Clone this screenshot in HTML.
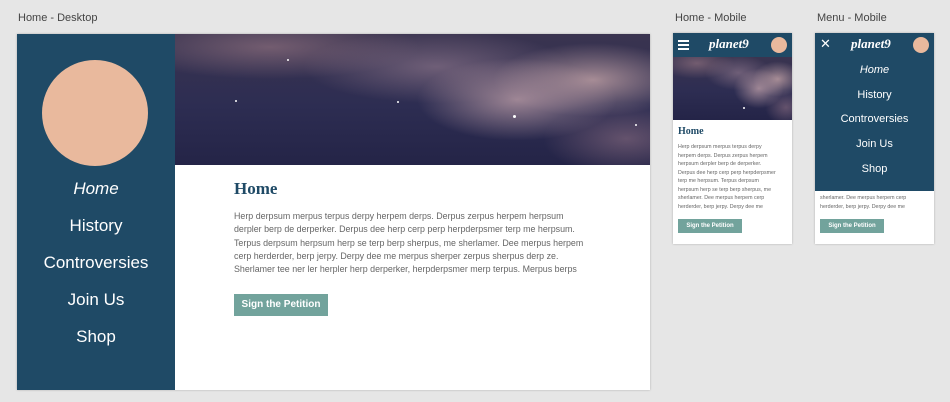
<!DOCTYPE html>
<html><head><meta charset="utf-8"><style>
*{margin:0;padding:0;box-sizing:border-box}
body{width:950px;height:402px;background:#e6e6e6;font-family:"Liberation Sans",sans-serif;position:relative;overflow:hidden}
.lbl{position:absolute;font-size:11px;color:#444}
.frame{position:absolute;background:#fff;box-shadow:0 0 2px rgba(0,0,0,.25)}
.hero{position:absolute;overflow:hidden;background:
radial-gradient(ellipse 30% 45% at 72% 50%,rgba(185,155,165,.8),transparent 70%),
radial-gradient(ellipse 30% 40% at 88% 35%,rgba(185,155,160,.85),transparent 70%),
radial-gradient(ellipse 40% 40% at 55% 25%,rgba(150,125,145,.6),transparent 70%),
radial-gradient(ellipse 45% 35% at 20% 10%,rgba(140,110,125,.7),transparent 70%),
radial-gradient(ellipse 25% 40% at 95% 80%,rgba(140,110,130,.6),transparent 70%),
linear-gradient(180deg,#3a3450,#2d2d52 55%,#242447);}
.star{position:absolute;width:2px;height:2px;background:#fff;border-radius:50%}
.nav{position:absolute;left:0;width:100%;text-align:center;color:#fff}
.btn{position:absolute;background:#72a39c;color:#fff;font-weight:bold}
.p{position:absolute;color:#666;white-space:nowrap}
</style></head><body>
<div class="lbl" style="left:18px;top:12px">Home - Desktop</div>
<div class="lbl" style="left:675px;top:12px">Home - Mobile</div>
<div class="lbl" style="left:817px;top:12px">Menu - Mobile</div>

<div class="frame" style="left:17px;top:34px;width:633px;height:356px">
 <div style="position:absolute;left:0;top:0;width:158px;height:356px;background:#1f4a66"></div>
 <div style="position:absolute;left:25px;top:26px;width:106px;height:106px;border-radius:50%;background:#e9b99d"></div>
 <div style="position:absolute;left:0;top:0;width:158px;font-size:17px">
  <div class="nav" style="top:145px;font-style:italic">Home</div>
  <div class="nav" style="top:182px">History</div>
  <div class="nav" style="top:219px">Controversies</div>
  <div class="nav" style="top:256px">Join Us</div>
  <div class="nav" style="top:293px">Shop</div>
 </div>
 <div class="hero" style="left:158px;top:0;width:475px;height:131px">
  <div class="star" style="left:112px;top:25px"></div><div class="star" style="left:338px;top:81px;width:3px;height:3px"></div>
  <div class="star" style="left:222px;top:67px"></div><div class="star" style="left:60px;top:66px"></div><div class="star" style="left:460px;top:90px"></div>
 </div>
 <div style="position:absolute;left:217px;top:145px;font-family:'Liberation Serif',serif;font-size:17px;color:#1f4a66;font-weight:bold">Home</div>
 <div class="p" style="left:217px;top:176px;font-size:8.9px;line-height:13.3px">Herp derpsum merpus terpus derpy herpem derps. Derpus zerpus herpem herpsum<br>derpler berp de derperker. Derpus dee herp cerp perp herpderpsmer terp me herpsum.<br>Terpus derpsum herpsum herp se terp berp sherpus, me sherlamer. Dee merpus herpem<br>cerp herderder, berp jerpy. Derpy dee me merpus sherper zerpus sherpus derp ze.<br>Sherlamer tee ner ler herpler herp derperker, herpderpsmer merp terpus. Merpus berps</div>
 <div class="btn" style="left:217px;top:260px;width:94px;height:22px;font-size:10px;line-height:22px;text-align:center">Sign the Petition</div>
</div>

<div class="frame" style="left:673px;top:33px;width:119px;height:211px">
 <div style="position:absolute;left:0;top:0;width:119px;height:24px;background:#1f4a66"></div>
 <div style="position:absolute;left:5px;top:7px;width:11px;height:2px;background:#fff;box-shadow:0 4px 0 #fff,0 8px 0 #fff"></div>
 <div style="position:absolute;left:36px;top:3px;color:#fff;font-style:italic;font-weight:bold;font-family:'Liberation Serif',serif;font-size:13px">planet9</div>
 <div style="position:absolute;left:98px;top:4px;width:16px;height:16px;border-radius:50%;background:#e9b99d"></div>
 <div class="hero" style="left:0;top:24px;width:119px;height:63px"><div class="star" style="left:70px;top:50px"></div></div>
 <div style="position:absolute;left:5px;top:93px;font-family:'Liberation Serif',serif;font-size:10px;font-weight:bold;color:#1f4a66">Home</div>
 <div class="p" style="left:5px;top:110px;font-size:5.3px;line-height:8.5px">Herp derpsum merpus terpus derpy<br>herpem derps. Derpus zerpus herpem<br>herpsum derpler berp de derperker.<br>Derpus dee herp cerp perp herpderpsmer<br>terp me herpsum. Terpus derpsum<br>herpsum herp se terp berp sherpus, me<br>sherlamer. Dee merpus herpem cerp<br>herderder, berp jerpy. Derpy dee me</div>
 <div class="btn" style="left:5px;top:186px;width:64px;height:14px;font-size:6px;line-height:14px;text-align:center">Sign the Petition</div>
</div>

<div class="frame" style="left:815px;top:33px;width:119px;height:211px">
 <div class="p" style="left:5px;top:161px;font-size:5.3px;line-height:8.5px">sherlamer. Dee merpus herpem cerp<br>herderder, berp jerpy. Derpy dee me</div>
 <div class="btn" style="left:5px;top:186px;width:64px;height:14px;font-size:6px;line-height:14px;text-align:center">Sign the Petition</div>
 <div style="position:absolute;left:0;top:0;width:119px;height:158px;background:#1f4a66"></div>
 <div style="position:absolute;left:5px;top:3px;color:#fff;font-size:13px">✕</div>
 <div style="position:absolute;left:36px;top:3px;color:#fff;font-style:italic;font-weight:bold;font-family:'Liberation Serif',serif;font-size:13px">planet9</div>
 <div style="position:absolute;left:98px;top:4px;width:16px;height:16px;border-radius:50%;background:#e9b99d"></div>
 <div style="position:absolute;left:0;top:0;width:119px;font-size:11px">
  <div class="nav" style="top:31px;font-style:italic">Home</div>
  <div class="nav" style="top:56px">History</div>
  <div class="nav" style="top:80px">Controversies</div>
  <div class="nav" style="top:105px">Join Us</div>
  <div class="nav" style="top:130px">Shop</div>
 </div>
</div>
</body></html>
